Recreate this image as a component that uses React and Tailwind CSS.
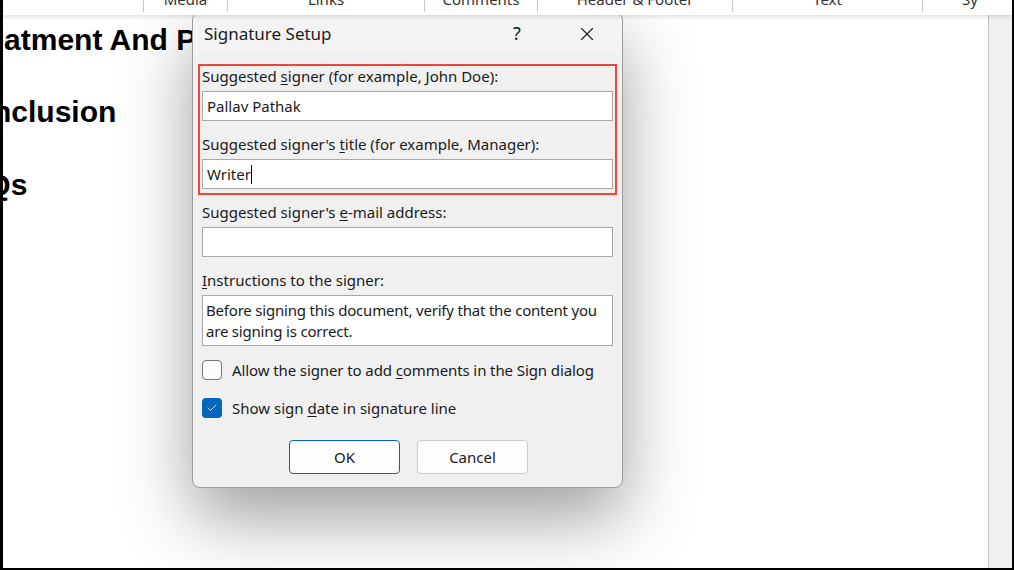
import { Check, X } from "lucide-react";

const tabs = [
  { label: "", w: "w-[141px]" },
  { label: "Media", w: "w-[84px]" },
  { label: "Links", w: "w-[197px]" },
  { label: "Comments", w: "w-[113px]" },
  { label: "Header & Footer", w: "w-[195px]" },
  { label: "Text", w: "w-[190px]" },
  { label: "Sy", w: "w-[94px]" },
];

const Field = ({ children, value, caret, tall }) => (
  <div className="flex flex-col">
    <div className="h-[20px] flex items-center text-[15px] text-[#1a1a1a]">
      {children}
    </div>
    <div
      className={
        tall
          ? "mt-[5px] h-[51px] bg-white border border-[#a8a8a8] px-[3px] pt-[4px] text-[15px] leading-[21px] tracking-[-0.2px] text-[#1a1a1a] whitespace-nowrap"
          : "mt-[5px] h-[30px] bg-white border border-[#a8a8a8] px-[4px] flex items-center text-[15px] text-[#1a1a1a]"
      }
    >
      {value}
      {caret && <span className="inline-block w-px h-[19px] bg-black" />}
    </div>
  </div>
);

const App = () => {
  return (
    <div
      className="relative w-[1014px] h-[570px] overflow-hidden bg-white border-l-[3px] border-r-2 border-b-2 border-black flex flex-col"
      style={{ fontFamily: '"Noto Sans", "Open Sans", sans-serif' }}
    >
      <div className="h-[15px] flex shrink-0 overflow-hidden shadow-[0_2px_4px_rgba(0,0,0,0.12)] z-10 bg-white">
        {tabs.map((t, i) => (
          <div
            key={i}
            className={`${t.w} shrink-0 h-[12px] flex justify-center ${
              i < tabs.length - 1 ? "border-r border-[#c8c8c8]" : ""
            }`}
          >
            <span className="text-[15px] leading-[16px] -translate-y-[9px] text-[#333]">
              {t.label}
            </span>
          </div>
        ))}
      </div>

      <div className="flex flex-1">
        <div
          className="flex-1 flex flex-col pt-[7px] text-black font-bold text-[30px] leading-[36px]"
          style={{ fontFamily: '"Liberation Sans", Arial, sans-serif' }}
        >
          <div className="-ml-[44px] whitespace-nowrap">Treatment And Prevention</div>
          <div className="-ml-[50px] mt-[36px] whitespace-nowrap">Conclusion</div>
          <div className="-ml-[54px] mt-[37px] whitespace-nowrap">FAQs</div>
        </div>
        <div className="w-[24px] bg-[#f0f0f0] border-l border-[#c4c4c4]" />
      </div>

      <div className="absolute left-[189px] top-[12px] w-[431px] rounded-[8px] border border-[#9c9c9c] bg-[#f0f0f0] shadow-[0_30px_70px_rgba(0,0,0,0.38)] overflow-hidden">
        <div className="h-[41px] bg-[#f3f3f3] flex items-center pl-[11px]">
          <span className="text-[17px] text-[#1a1a1a] flex-1">Signature Setup</span>
          <span className="text-[18px] text-[#1a1a1a] w-[70px] text-center">?</span>
          <span className="w-[70px] flex justify-center">
            <X size={22} strokeWidth={1.2} color="#1a1a1a" />
          </span>
        </div>

        <div className="px-[9px] pt-[10px] pb-[13px] flex flex-col">
          <div className="-mx-[4px] px-[2px] border-2 border-[#ef4638] pb-[4px] flex flex-col gap-[13px]">
            <Field value="Pallav Pathak">
              <span>
                Suggested <span className="underline underline-offset-2">s</span>igner (for example, John Doe):
              </span>
            </Field>
            <Field value="Writer" caret>
              <span>
                Suggested signer's <span className="underline underline-offset-2">t</span>itle (for example, Manager):
              </span>
            </Field>
          </div>

          <div className="mt-[7px] flex flex-col gap-[13px]">
            <Field value="">
              <span>
                Suggested signer's <span className="underline underline-offset-2">e</span>-mail address:
              </span>
            </Field>
            <Field
              tall
              value={
                <>
                  Before signing this document, verify that the content you
                  <br />
                  are signing is correct.
                </>
              }
            >
              <span>
                <span className="underline underline-offset-2">I</span>nstructions to the signer:
              </span>
            </Field>
          </div>

          <div className="mt-[14px] flex items-center gap-[10px] h-[20px]">
            <div className="w-[20px] h-[20px] rounded-[4px] border border-[#767676] bg-[#fbfbfb]" />
            <span className="text-[15px] tracking-[-0.1px] text-[#1a1a1a]">
              Allow the signer to add <span className="underline underline-offset-2">c</span>omments in the Sign dialog
            </span>
          </div>
          <div className="mt-[18px] flex items-center gap-[10px] h-[20px]">
            <div className="w-[20px] h-[20px] rounded-[4px] bg-[#0067c0] flex items-center justify-center">
              <Check size={12} strokeWidth={1.6} color="white" />
            </div>
            <span className="text-[15px] text-[#1a1a1a]">
              Show sign <span className="underline underline-offset-2">d</span>ate in signature line
            </span>
          </div>

          <div className="mt-[22px] flex justify-center gap-[17px] pl-[2px]">
            <button className="w-[111px] h-[34px] rounded-[4px] border border-[#0067c0] bg-[#fdfdfd] text-[15px] text-[#1a1a1a]">
              OK
            </button>
            <button className="w-[111px] h-[34px] rounded-[4px] border border-[#cccccc] bg-[#fdfdfd] text-[15px] text-[#1a1a1a]">
              Cancel
            </button>
          </div>
        </div>
      </div>
    </div>
  );
};

export default App;
